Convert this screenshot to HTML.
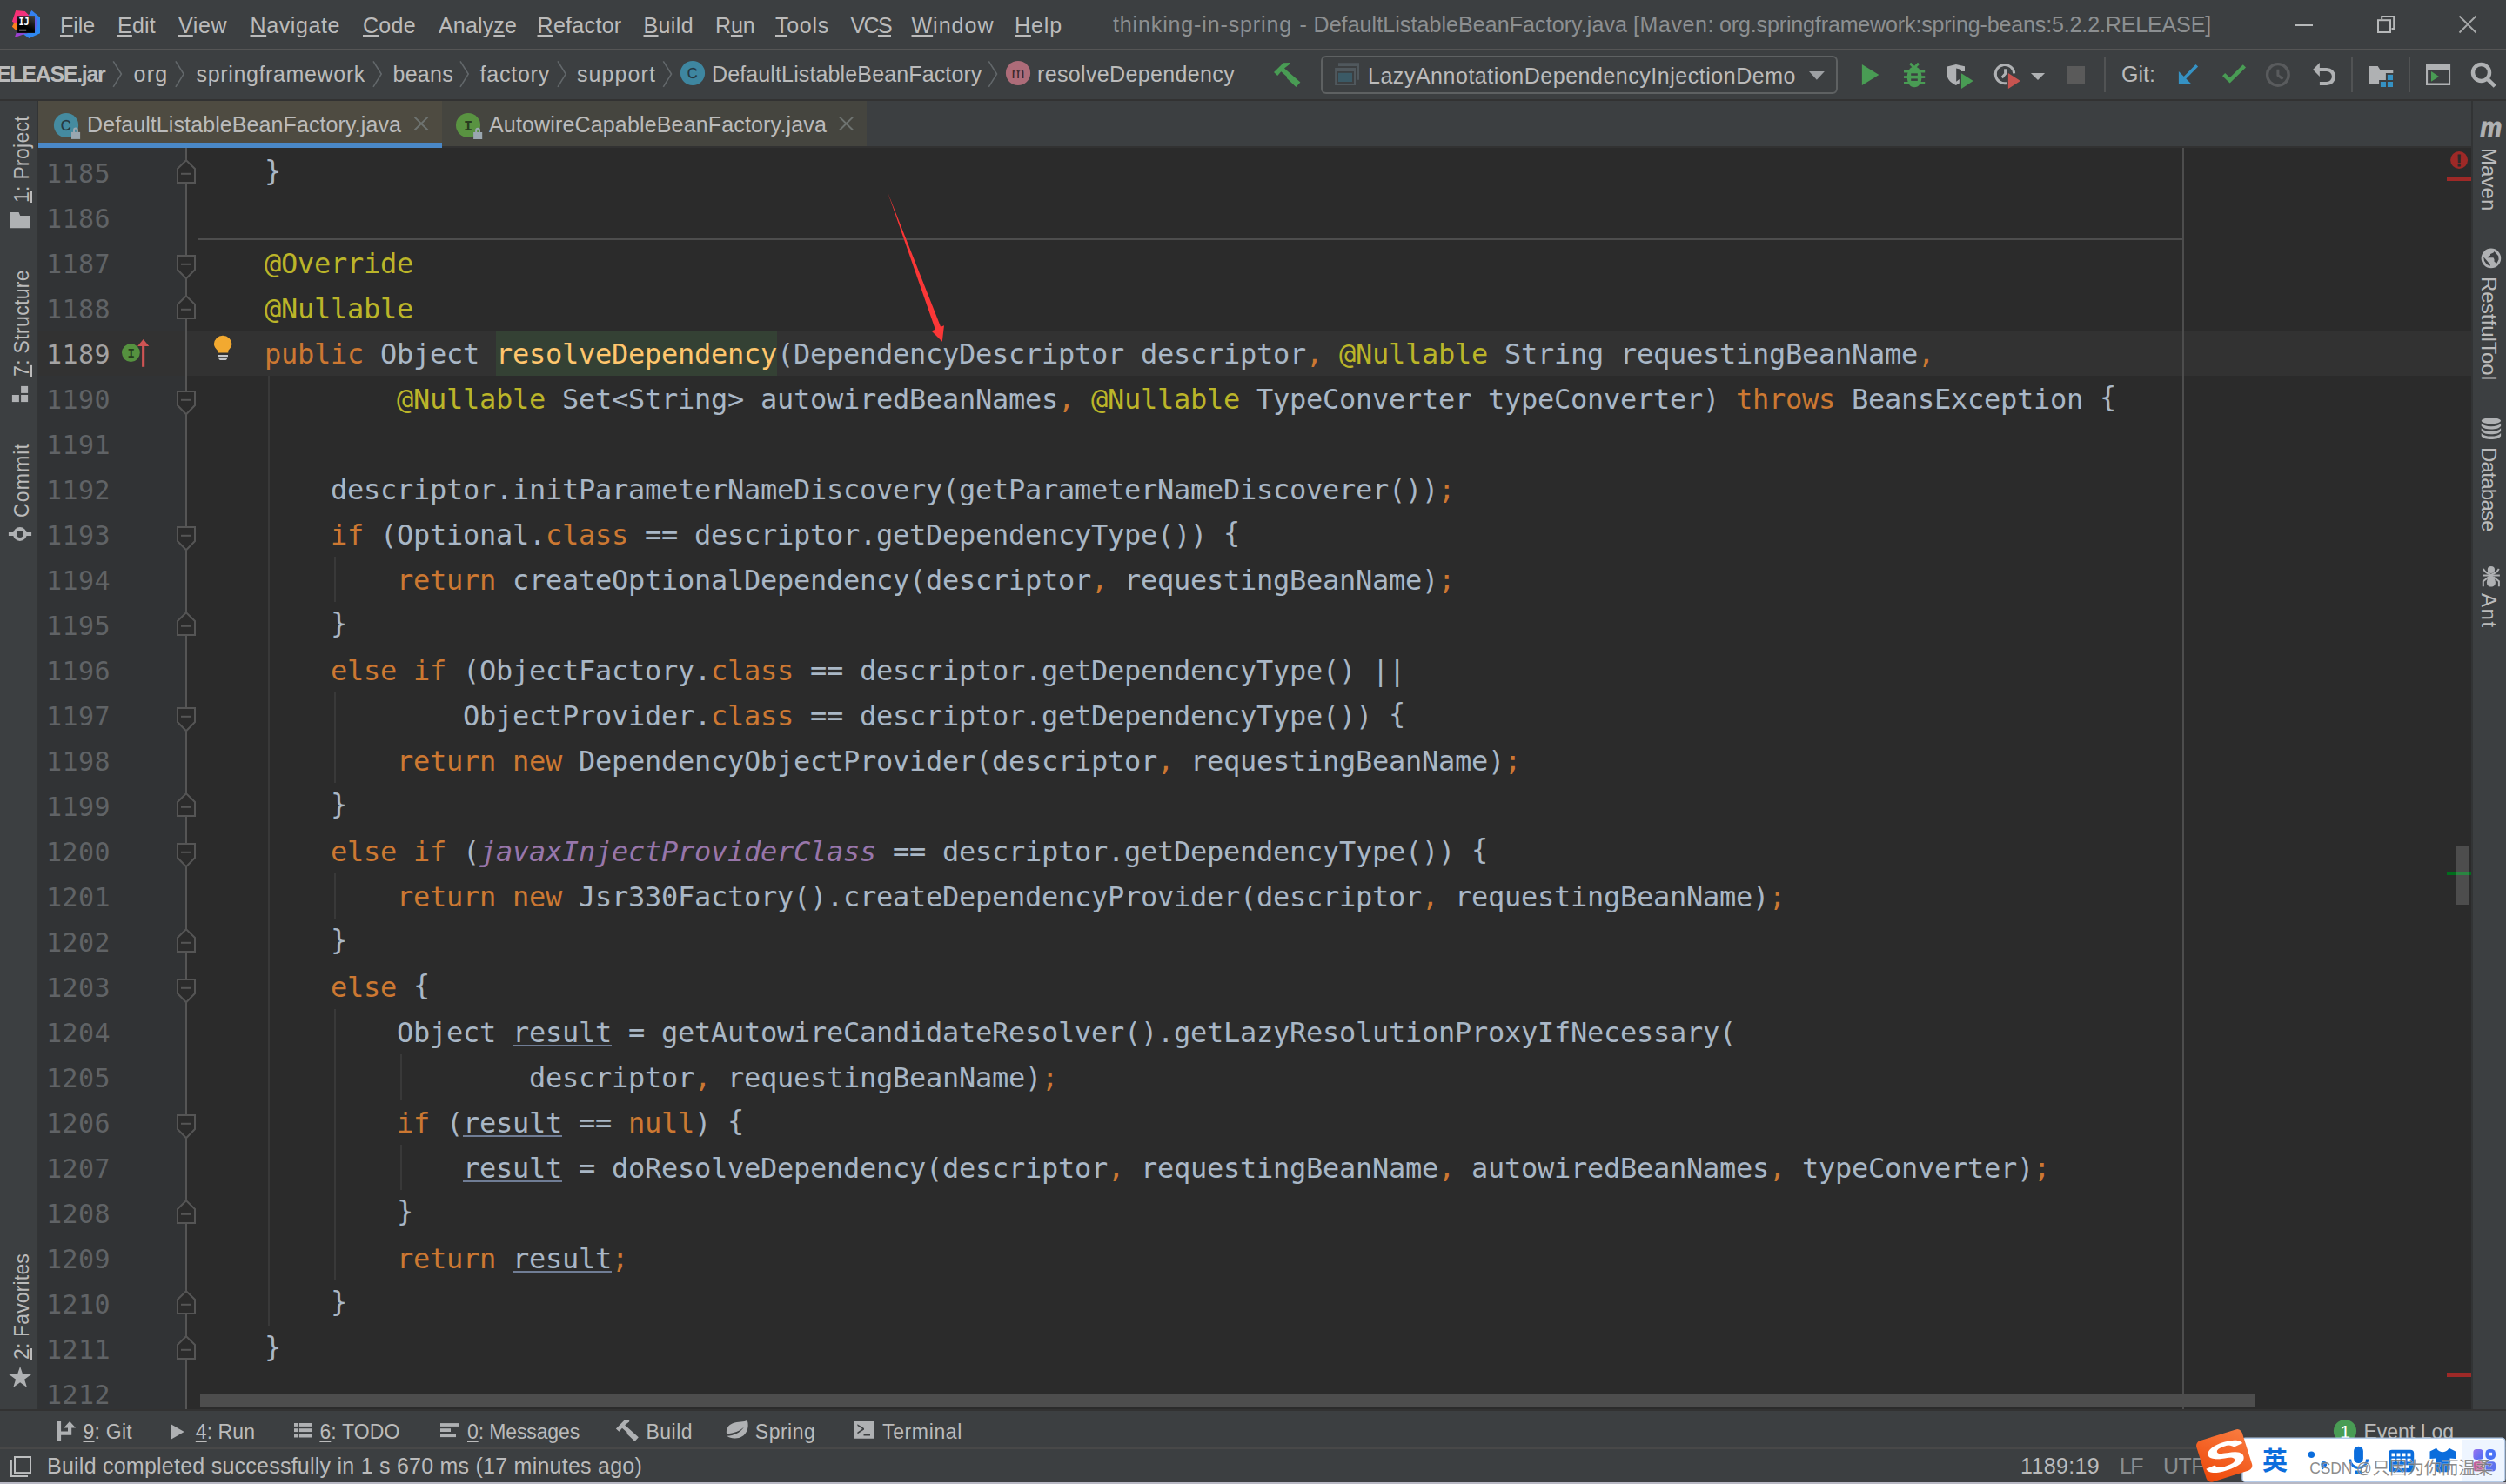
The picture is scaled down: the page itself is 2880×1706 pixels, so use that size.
<!DOCTYPE html>
<html lang="en"><head><meta charset="utf-8"><title>thinking-in-spring - DefaultListableBeanFactory.java</title>
<style>
*{box-sizing:border-box}
html,body{margin:0;padding:0}
body{width:2880px;height:1706px;overflow:hidden;background:#3c3f41;position:relative;font-family:"Liberation Sans", "Noto Sans CJK SC", sans-serif;color:#bbbbbb}
.a{position:absolute}
.t{position:absolute;line-height:0;white-space:pre;font-size:24px}
.t::before{content:"";display:inline-block;height:40px;width:0}
.r{position:absolute;line-height:0;white-space:pre;font-size:23px;transform-origin:0 0;transform:rotate(-90deg)}
.r::before{content:"";display:inline-block;height:40px;width:0}
.rr{position:absolute;line-height:0;white-space:pre;font-size:23px;transform-origin:0 0;transform:rotate(90deg)}
.rr::before{content:"";display:inline-block;height:40px;width:0}
u{text-decoration:underline;text-underline-offset:2.4px;text-decoration-thickness:2px}
.cl{position:absolute;left:228px;height:52px;line-height:0;white-space:pre;font-family:"DejaVu Sans Mono", "Liberation Mono", monospace;font-size:32px;letter-spacing:-0.266px;color:#a9b7c6}
.cl::before{content:"";display:inline-block;height:38px;width:0}
.ln{position:absolute;left:53px;width:80px;height:52px;line-height:0;white-space:pre;font-family:"DejaVu Sans Mono", "Liberation Mono", monospace;font-size:30px;letter-spacing:0.4px;color:#606366}
.ln::before{content:"";display:inline-block;height:38px;width:0}
.k{color:#cc7832}.an{color:#bbb529}.md{color:#ffc66d}
.br{position:relative;top:-3px}.sf{color:#9876aa;font-style:italic}.rv{text-decoration:underline #707d95;text-decoration-thickness:2px;text-underline-offset:3px}
svg{position:absolute;overflow:visible}
</style></head>
<body>
<!-- ===== menu bar ===== -->
<div class="a" id="menubar" style="left:0;top:0;width:2880px;height:56px;background:#3c3f41"></div>
<div class="a" style="left:0;top:56px;width:2880px;height:2px;background:#555555"></div>
<!-- ===== nav bar ===== -->
<div class="a" id="navbar" style="left:0;top:58px;width:2880px;height:56px;background:#3c3f41"></div>
<div class="a" style="left:0;top:114px;width:2880px;height:2px;background:#323232"></div>
<!-- ===== tab row ===== -->
<div class="a" id="tabs" style="left:44px;top:116px;width:2798px;height:52px;background:#3c3f41"></div>
<div class="a" style="left:44px;top:116px;width:464px;height:53px;background:#4e4b41"></div>
<div class="a" style="left:44px;top:164px;width:464px;height:6px;background:#4a88c7"></div>
<div class="a" style="left:508px;top:116px;width:488px;height:52px;background:#45453f"></div>
<!-- ===== editor ===== -->
<div class="a" id="editor" style="left:44px;top:168px;width:2798px;height:1452px;background:#2b2b2b"></div>
<div class="a" id="gutter" style="left:44px;top:168px;width:170px;height:1452px;background:#313335"></div>
<div class="a" style="left:44px;top:164px;width:464px;height:6px;background:#4a88c7"></div>
<div class="a" style="left:508px;top:168px;width:2332px;height:2px;background:#323232"></div>
<!-- caret row -->
<div class="a" style="left:44px;top:380px;width:2797px;height:52px;background:#323232"></div>
<div class="a" style="left:570px;top:380px;width:323px;height:52px;background:#344134"></div>
<!-- method separator -->
<div class="a" style="left:228px;top:274px;width:2281px;height:2px;background:#4d4d4d"></div>
<!-- right margin -->
<div class="a" style="left:2508px;top:170px;width:2px;height:1450px;background:#4d4d4d"></div>
<!-- indent guides -->
<div class="a" style="left:308px;top:432px;width:2px;height:1092px;background:#393939"></div>
<div class="a" style="left:384px;top:640px;width:2px;height:52px;background:#393939"></div>
<div class="a" style="left:384px;top:796px;width:2px;height:104px;background:#393939"></div>
<div class="a" style="left:384px;top:1004px;width:2px;height:52px;background:#393939"></div>
<div class="a" style="left:384px;top:1160px;width:2px;height:312px;background:#393939"></div>
<div class="a" style="left:460px;top:1212px;width:2px;height:52px;background:#393939"></div>
<div class="a" style="left:460px;top:1316px;width:2px;height:52px;background:#393939"></div>
<!-- fold line -->
<div class="a" style="left:213px;top:170px;width:2px;height:1450px;background:#555555"></div>
<div class="ln" style="top:172px">1185</div>
<div class="cl" style="top:172px">    <span class="br">}</span></div>
<div class="ln" style="top:224px">1186</div>
<div class="ln" style="top:276px">1187</div>
<div class="cl" style="top:276px">    <span class="an">@Override</span></div>
<div class="ln" style="top:328px">1188</div>
<div class="cl" style="top:328px">    <span class="an">@Nullable</span></div>
<div class="ln" style="top:380px;color:#a4a3a3">1189</div>
<div class="cl" style="top:380px">    <span class="k">public</span> Object <span class="md">resolveDependency</span>(DependencyDescriptor descriptor<span class="k">,</span> <span class="an">@Nullable</span> String requestingBeanName<span class="k">,</span></div>
<div class="ln" style="top:432px">1190</div>
<div class="cl" style="top:432px">            <span class="an">@Nullable</span> Set&lt;String&gt; autowiredBeanNames<span class="k">,</span> <span class="an">@Nullable</span> TypeConverter typeConverter) <span class="k">throws</span> BeansException <span class="br">{</span></div>
<div class="ln" style="top:484px">1191</div>
<div class="ln" style="top:536px">1192</div>
<div class="cl" style="top:536px">        descriptor.initParameterNameDiscovery(getParameterNameDiscoverer())<span class="k">;</span></div>
<div class="ln" style="top:588px">1193</div>
<div class="cl" style="top:588px">        <span class="k">if</span> (Optional.<span class="k">class</span> == descriptor.getDependencyType()) <span class="br">{</span></div>
<div class="ln" style="top:640px">1194</div>
<div class="cl" style="top:640px">            <span class="k">return</span> createOptionalDependency(descriptor<span class="k">,</span> requestingBeanName)<span class="k">;</span></div>
<div class="ln" style="top:692px">1195</div>
<div class="cl" style="top:692px">        <span class="br">}</span></div>
<div class="ln" style="top:744px">1196</div>
<div class="cl" style="top:744px">        <span class="k">else</span> <span class="k">if</span> (ObjectFactory.<span class="k">class</span> == descriptor.getDependencyType() ||</div>
<div class="ln" style="top:796px">1197</div>
<div class="cl" style="top:796px">                ObjectProvider.<span class="k">class</span> == descriptor.getDependencyType()) <span class="br">{</span></div>
<div class="ln" style="top:848px">1198</div>
<div class="cl" style="top:848px">            <span class="k">return</span> <span class="k">new</span> DependencyObjectProvider(descriptor<span class="k">,</span> requestingBeanName)<span class="k">;</span></div>
<div class="ln" style="top:900px">1199</div>
<div class="cl" style="top:900px">        <span class="br">}</span></div>
<div class="ln" style="top:952px">1200</div>
<div class="cl" style="top:952px">        <span class="k">else</span> <span class="k">if</span> (<span class="sf">javaxInjectProviderClass</span> == descriptor.getDependencyType()) <span class="br">{</span></div>
<div class="ln" style="top:1004px">1201</div>
<div class="cl" style="top:1004px">            <span class="k">return</span> <span class="k">new</span> Jsr330Factory().createDependencyProvider(descriptor<span class="k">,</span> requestingBeanName)<span class="k">;</span></div>
<div class="ln" style="top:1056px">1202</div>
<div class="cl" style="top:1056px">        <span class="br">}</span></div>
<div class="ln" style="top:1108px">1203</div>
<div class="cl" style="top:1108px">        <span class="k">else</span> <span class="br">{</span></div>
<div class="ln" style="top:1160px">1204</div>
<div class="cl" style="top:1160px">            Object <span class="rv">result</span> = getAutowireCandidateResolver().getLazyResolutionProxyIfNecessary(</div>
<div class="ln" style="top:1212px">1205</div>
<div class="cl" style="top:1212px">                    descriptor<span class="k">,</span> requestingBeanName)<span class="k">;</span></div>
<div class="ln" style="top:1264px">1206</div>
<div class="cl" style="top:1264px">            <span class="k">if</span> (<span class="rv">result</span> == <span class="k">null</span>) <span class="br">{</span></div>
<div class="ln" style="top:1316px">1207</div>
<div class="cl" style="top:1316px">                <span class="rv">result</span> = doResolveDependency(descriptor<span class="k">,</span> requestingBeanName<span class="k">,</span> autowiredBeanNames<span class="k">,</span> typeConverter)<span class="k">;</span></div>
<div class="ln" style="top:1368px">1208</div>
<div class="cl" style="top:1368px">            <span class="br">}</span></div>
<div class="ln" style="top:1420px">1209</div>
<div class="cl" style="top:1420px">            <span class="k">return</span> <span class="rv">result</span><span class="k">;</span></div>
<div class="ln" style="top:1472px">1210</div>
<div class="cl" style="top:1472px">        <span class="br">}</span></div>
<div class="ln" style="top:1524px">1211</div>
<div class="cl" style="top:1524px">    <span class="br">}</span></div>
<div class="ln" style="top:1576px">1212</div>
<!-- horizontal scrollbar -->
<div class="a" style="left:230px;top:1602px;width:2362px;height:16px;background:#4d4d4d"></div>
<!-- vertical scrollbar + stripe marks -->
<div class="a" style="left:2812px;top:1002px;width:28px;height:4px;background:#006e1c"></div>
<div class="a" style="left:2822px;top:972px;width:16px;height:68px;background:rgba(255,255,255,.165)"></div>
<div class="a" style="left:2812px;top:204px;width:28px;height:4px;background:#9e2927"></div>
<div class="a" style="left:2812px;top:1578px;width:28px;height:5px;background:#9e2927"></div>
<!-- ===== left strip ===== -->
<div class="a" id="leftstrip" style="left:0;top:116px;width:42px;height:1504px;background:#3c3f41"></div>
<div class="a" style="left:42px;top:116px;width:2px;height:1504px;background:#323435"></div>
<!-- ===== right strip ===== -->
<div class="a" id="rightstrip" style="left:2842px;top:116px;width:38px;height:1504px;background:#3c3f41"></div>
<div class="a" style="left:2840px;top:116px;width:2px;height:1504px;background:#323435"></div>
<!-- ===== bottom tool bar ===== -->
<div class="a" style="left:0;top:1620px;width:2880px;height:2px;background:#323232"></div>
<div class="a" id="toolbar" style="left:0;top:1622px;width:2880px;height:42px;background:#3c3f41"></div>
<div class="a" style="left:0;top:1664px;width:2880px;height:2px;background:#484848"></div>
<div class="a" id="statusbar" style="left:0;top:1666px;width:2880px;height:37px;background:#3c3f41"></div>
<div class="a" style="left:0;top:1704px;width:2880px;height:2px;background:#b8b8c4"></div>
<div class="t" id="t0" style="left:69.0px;top:-2.0px;font-size:25px;letter-spacing:-0.074px;"><u>F</u>ile</div>
<div class="t" id="t1" style="left:135.0px;top:-2.0px;font-size:25px;letter-spacing:0.227px;"><u>E</u>dit</div>
<div class="t" id="t2" style="left:205.0px;top:-2.0px;font-size:25px;letter-spacing:0.562px;"><u>V</u>iew</div>
<div class="t" id="t3" style="left:287.5px;top:-2.0px;font-size:25px;letter-spacing:0.602px;"><u>N</u>avigate</div>
<div class="t" id="t4" style="left:417.0px;top:-2.0px;font-size:25px;letter-spacing:0.305px;"><u>C</u>ode</div>
<div class="t" id="t5" style="left:504.0px;top:-2.0px;font-size:25px;letter-spacing:0.150px;">Analy<u>z</u>e</div>
<div class="t" id="t6" style="left:617.5px;top:-2.0px;font-size:25px;letter-spacing:0.312px;"><u>R</u>efactor</div>
<div class="t" id="t7" style="left:739.5px;top:-2.0px;font-size:25px;letter-spacing:0.378px;"><u>B</u>uild</div>
<div class="t" id="t8" style="left:822.0px;top:-2.0px;font-size:25px;letter-spacing:-0.125px;">R<u>u</u>n</div>
<div class="t" id="t9" style="left:891.0px;top:-2.0px;font-size:25px;letter-spacing:0.725px;"><u>T</u>ools</div>
<div class="t" id="t10" style="left:977.5px;top:-2.0px;font-size:25px;letter-spacing:-1.641px;">VC<u>S</u></div>
<div class="t" id="t11" style="left:1047.5px;top:-2.0px;font-size:25px;letter-spacing:1.010px;"><u>W</u>indow</div>
<div class="t" id="t12" style="left:1166.0px;top:-2.0px;font-size:25px;letter-spacing:0.891px;"><u>H</u>elp</div>
<div class="t" id="t13" style="left:1279.0px;top:-3.5px;font-size:25px;color:#8c8f91;letter-spacing:0.868px;">thinking-in-spring</div>
<div class="t" id="t14" style="left:1493.5px;top:-3.5px;font-size:25px;color:#8c8f91;letter-spacing:0.672px;">-</div>
<div class="t" id="t15" style="left:1509.5px;top:-3.5px;font-size:25px;color:#8c8f91;letter-spacing:0.078px;">DefaultListableBeanFactory.java</div>
<div class="t" id="t16" style="left:1877.0px;top:-3.5px;font-size:25px;color:#8c8f91;letter-spacing:0.580px;">[Maven:</div>
<div class="t" id="t17" style="left:1976.0px;top:-3.5px;font-size:25px;color:#8c8f91;letter-spacing:-0.130px;">org.springframework:spring-beans:5.2.2.RELEASE]</div>
<div class="t" id="t18" style="left:-4.0px;top:54.0px;font-size:25px;font-weight:bold;letter-spacing:-1.306px;">ELEASE.jar</div>
<div class="t" id="t19" style="left:153.5px;top:54.0px;font-size:25px;letter-spacing:1.286px;">org</div>
<div class="t" id="t20" style="left:225.5px;top:54.0px;font-size:25px;letter-spacing:0.648px;">springframework</div>
<div class="t" id="t21" style="left:451.5px;top:54.0px;font-size:25px;letter-spacing:0.275px;">beans</div>
<div class="t" id="t22" style="left:551.5px;top:54.0px;font-size:25px;letter-spacing:0.781px;">factory</div>
<div class="t" id="t23" style="left:663.0px;top:54.0px;font-size:25px;letter-spacing:1.087px;">support</div>
<div class="t" id="t24" style="left:818.0px;top:54.0px;font-size:25px;letter-spacing:0.130px;">DefaultListableBeanFactory</div>
<div class="t" id="t25" style="left:1192.0px;top:54.0px;font-size:25px;letter-spacing:0.354px;">resolveDependency</div>
<div class="t" id="t26" style="left:1572.0px;top:56.0px;font-size:25px;letter-spacing:0.526px;">LazyAnnotationDependencyInjectionDemo</div>
<div class="t" id="t27" style="left:2438.0px;top:53.5px;font-size:25px;letter-spacing:0.023px;">Git:</div>
<div class="t" id="t28" style="left:100.0px;top:112.0px;font-size:25px;letter-spacing:0.094px;">DefaultListableBeanFactory.java</div>
<div class="t" id="t29" style="left:562.0px;top:112.0px;font-size:25px;letter-spacing:0.158px;">AutowireCapableBeanFactory.java</div>
<div class="t" id="t30" style="left:95.5px;top:1614.0px;font-size:23px;letter-spacing:0.255px;"><u>9</u>: Git</div>
<div class="t" id="t31" style="left:224.8px;top:1614.0px;font-size:23px;letter-spacing:0.078px;"><u>4</u>: Run</div>
<div class="t" id="t32" style="left:367.4px;top:1614.0px;font-size:23px;letter-spacing:0.116px;"><u>6</u>: TODO</div>
<div class="t" id="t33" style="left:537.0px;top:1614.0px;font-size:23px;letter-spacing:-0.128px;"><u>0</u>: Messages</div>
<div class="t" id="t34" style="left:742.4px;top:1614.0px;font-size:23px;letter-spacing:0.509px;">Build</div>
<div class="t" id="t35" style="left:867.8px;top:1614.0px;font-size:23px;letter-spacing:0.503px;">Spring</div>
<div class="t" id="t36" style="left:1014.0px;top:1614.0px;font-size:23px;letter-spacing:0.635px;">Terminal</div>
<div class="t" id="t37" style="left:2716.5px;top:1614.0px;font-size:23px;letter-spacing:-0.010px;">Event Log</div>
<div class="t" id="t38" style="left:54.0px;top:1654.0px;font-size:25px;letter-spacing:0.241px;">Build completed successfully in 1 s 670 ms (17 minutes ago)</div>
<div class="t" id="t39" style="left:2322.0px;top:1654.0px;font-size:25px;letter-spacing:0.355px;">1189:19</div>
<div class="t" id="t40" style="left:2436.0px;top:1654.0px;font-size:25px;color:#8a8d8f;letter-spacing:-1.594px;">LF</div>
<div class="t" id="t41" style="left:2486.0px;top:1654.0px;font-size:25px;color:#8a8d8f;letter-spacing:-0.566px;">UTF-8</div>
<div class="r" id="t42" style="left:-7.0px;top:233.0px;letter-spacing:0.283px;"><u>1</u>: Project</div>
<div class="r" id="t43" style="left:-7.0px;top:433.0px;letter-spacing:0.341px;"><u>7</u>: Structure</div>
<div class="r" id="t44" style="left:-7.0px;top:595.0px;letter-spacing:1.128px;">Commit</div>
<div class="r" id="t45" style="left:-7.0px;top:1563.0px;letter-spacing:0.152px;"><u>2</u>: Favorites</div>
<div class="rr" id="t46" style="left:2891.5px;top:169.7px;font-size:24px;letter-spacing:0.071px;">Maven</div>
<div class="rr" id="t47" style="left:2891.5px;top:318.0px;font-size:24px;letter-spacing:0.024px;">RestfulTool</div>
<div class="rr" id="t48" style="left:2891.5px;top:514.0px;font-size:24px;letter-spacing:-0.719px;">Database</div>
<div class="rr" id="t49" style="left:2891.5px;top:682.0px;font-size:24px;letter-spacing:1.556px;">Ant</div>
<svg id="icons" width="2880" height="1706" viewBox="0 0 2880 1706" style="left:0;top:0">
<defs><linearGradient id="lgb" x1="0" y1="0" x2="1" y2="1"><stop offset="0" stop-color="#3a7bf2"/><stop offset="1" stop-color="#2a8cf0"/></linearGradient><linearGradient id="lgp" x1="0" y1="0" x2="1" y2="1"><stop offset="0" stop-color="#fc2d6e"/><stop offset="1" stop-color="#e8388c"/></linearGradient><linearGradient id="lgm" x1="0" y1="1" x2="1" y2="0"><stop offset="0" stop-color="#b436c9"/><stop offset="1" stop-color="#5d5be0"/></linearGradient><linearGradient id="lgk" x1="1" y1="0" x2="0.4" y2="1"><stop offset="0" stop-color="#454545"/><stop offset="0.7" stop-color="#000"/></linearGradient><linearGradient id="lgs" x1="1" y1="0" x2="0" y2="1"><stop offset="0" stop-color="#f97c40"/><stop offset="1" stop-color="#ee4709"/></linearGradient><linearGradient id="lgq" x1="0" y1="0" x2="1" y2="1"><stop offset="0" stop-color="#9a73ee"/><stop offset="1" stop-color="#4a6cf5"/></linearGradient></defs>
<g id="logo"><polygon points="18.2,12 28.7,12.9 33.2,17.5 33.2,19 20.1,19 20.1,26.1 16,26.1 13.9,24.7" fill="url(#lgp)"/><polygon points="16.3,26.1 20.1,26.1 20.1,34 18.7,34.9 13.9,30.7" fill="#fc801d"/><polygon points="36.4,12 46,20.1 46,38.3 33.5,44 26.8,39.3 33,37.8 40,37.8 40,18.2 33.2,18.2 33,17.2" fill="url(#lgb)"/><polygon points="40,19 43,25 40,37.8" fill="#7a4fe0" opacity=".7"/><polygon points="20.1,34 20.1,37.8 33,37.8 26.8,39.6 16.8,42.9" fill="url(#lgm)"/><rect x="20.1" y="18.2" width="19.9" height="19.6" fill="url(#lgk)"/><text x="21.4" y="29" font-family="'DejaVu Sans Mono','Liberation Mono',monospace" font-weight="bold" font-size="11.5" fill="#fff" textLength="12.4" lengthAdjust="spacingAndGlyphs">IJ</text><rect x="22" y="33.9" width="8.2" height="1.4" fill="#fff"/></g>
<g id="winbtns" fill="none" stroke="#b7b9ba" stroke-width="2"><path d="M2638 29H2658"/><rect x="2733" y="23.2" width="14" height="13.8"/><path d="M2737.2 22.2V19H2751.2V33H2748.5"/><path d="M2826.5 18.5L2845.5 37.5M2845.5 18.5L2826.5 37.5" stroke="#a7a9aa" stroke-width="1.9"/></g>
<path d="M130.2 70.3l9.2 14.8l-9.2 14.8" fill="none" stroke="#63686b" stroke-width="1.6"/>
<path d="M201.9 70.3l9.2 14.8l-9.2 14.8" fill="none" stroke="#63686b" stroke-width="1.6"/>
<path d="M429.0 70.3l9.2 14.8l-9.2 14.8" fill="none" stroke="#63686b" stroke-width="1.6"/>
<path d="M529.0 70.3l9.2 14.8l-9.2 14.8" fill="none" stroke="#63686b" stroke-width="1.6"/>
<path d="M641.0 70.3l9.2 14.8l-9.2 14.8" fill="none" stroke="#63686b" stroke-width="1.6"/>
<path d="M762.3 70.3l9.2 14.8l-9.2 14.8" fill="none" stroke="#63686b" stroke-width="1.6"/>
<path d="M1136.3 70.3l9.2 14.8l-9.2 14.8" fill="none" stroke="#63686b" stroke-width="1.6"/>
<g id="navicons"><circle cx="796" cy="84" r="14.1" fill="#40b6e0" fill-opacity=".6"/><text x="795.7" y="89.8" font-family="'Liberation Sans',sans-serif" font-size="16.5" fill="#1f2a30" fill-opacity=".85" text-anchor="middle" stroke="#1f2a30" stroke-opacity=".5" stroke-width=".5">C</text><circle cx="1170" cy="84" r="14.1" fill="#f98b9e" fill-opacity=".6"/><text x="1169.9" y="89.9" font-family="'Liberation Sans',sans-serif" font-size="18" fill="#2f1f24" fill-opacity=".9" text-anchor="middle">m</text></g>
<path id="hammer" d="M1464 83.1L1474.9 72.2L1482.1 72L1481.8 73.9L1476 78.4L1494.4 94.6L1489.4 99.9L1479 90.1V88.2L1472.3 82.3L1468.2 87.1Z" fill="#499c54"/>
<rect x="1519" y="65" width="592" height="42" rx="5" fill="none" stroke="#5e6162" stroke-width="2"/>
<g id="cfgicon"><path d="M1538 72.2H1562V91.8H1560V75.9H1538Z" fill="#50585d"/><path d="M1534.1 78.1H1558V97.9H1534.1Z M1536.1 82.1V95.9H1556V82.1Z" fill="#50585d" fill-rule="evenodd"/><rect x="1538" y="83.8" width="16" height="10.2" fill="#3b5a66"/></g>
<polygon points="2079,82 2096.9,82 2087.9,91.8" fill="#9da0a3"/>
<polygon id="run" points="2139.9,74.1 2159.4,85.9 2139.9,97.9" fill="#499c54"/>
<g id="bug" fill="#499c54"><path d="M2191.8 88.5c0-7 3.3-12 8.3-12s8.3 5 8.3 12s-3.3 11.8-8.3 11.8s-8.3-4.8-8.3-11.8z"/><path d="M2195.1 72.8L2200.1 77.8L2205 72.8" fill="none" stroke="#499c54" stroke-width="3"/><rect x="2188" y="80.6" width="24.2" height="2.9"/><rect x="2188" y="87.2" width="24.2" height="2.7"/><rect x="2188" y="94" width="24.2" height="3"/><rect x="2196.2" y="84.3" width="7.6" height="2.5" fill="#3c3f41"/><rect x="2196.2" y="90.4" width="7.6" height="2.5" fill="#3c3f41"/></g>
<g id="cover"><path d="M2237.8 76.4L2247.9 73.9L2258 76.2V82H2254V80L2248.2 78.4V93.8L2251.8 91V95.5L2247.9 98C2241 94.5 2237.8 91 2237.8 86Z" fill="#afb1b3"/><polygon points="2254,84.3 2267.7,93.1 2254,102.1" fill="#499c54"/></g>
<g id="profile"><path d="M2314.7 84.4A10.7 10.7 0 1 0 2306.3 95.6" fill="none" stroke="#afb1b3" stroke-width="3"/><path d="M2304.6 79.2V84.8L2300.7 89.3" fill="none" stroke="#afb1b3" stroke-width="3"/><polygon points="2307.9,84 2321.9,93.1 2307.9,102.1" fill="#c75450"/><polygon points="2333.9,83.9 2350.1,83.9 2342,92.1" fill="#afb1b3"/></g>
<rect x="2376" y="76" width="20" height="20" fill="#5a5a5a"/>
<rect x="2418" y="66" width="2" height="40" fill="#515354"/>
<rect x="2702" y="66" width="2" height="40" fill="#515354"/>
<rect x="2768" y="66" width="2" height="40" fill="#515354"/>
<g id="gitupd"><path d="M2524.8 75.2L2510 90.3" stroke="#3592c4" stroke-width="3.7" fill="none"/><polygon points="2503.9,82 2503.9,96 2517.9,96" fill="#3592c4"/></g>
<path d="M2555.6 85.7L2562.6 92.4L2579.4 75.9" fill="none" stroke="#499c54" stroke-width="4.6"/>
<g fill="none" stroke="#595b5d"><circle cx="2617.9" cy="85.9" r="12.3" stroke-width="3.4"/><path d="M2617.9 79.8V86.5L2623.5 90.7" stroke-width="3"/></g>
<g id="undo"><polygon points="2658.1,80 2665.9,72 2665.9,87.9" fill="#afb1b3"/><path d="M2665 80H2674A8 8 0 0 1 2674 96H2665.9" fill="none" stroke="#afb1b3" stroke-width="4.2"/></g>
<g id="pstruct"><polygon points="2722,76 2732.7,76 2735.2,79.9 2750.3,79.9 2750.3,84 2741.9,84 2741.9,92.1 2734.1,92.1 2734.1,96.1 2722,96.1" fill="#afb1b3"/><rect x="2743.9" y="85.9" width="6.1" height="6.1" fill="#3592c4"/><rect x="2735.9" y="94" width="6.1" height="6" fill="#3592c4"/><rect x="2743.9" y="94" width="6.1" height="6" fill="#3592c4"/></g>
<g id="runany"><path d="M2788 73.9H2816.1V98.1H2788Z M2790.1 80.2V95.6H2814V80.2Z" fill="#afb1b3" fill-rule="evenodd"/><polygon points="2794,82.1 2803,88 2794,93.8" fill="#499c54"/></g>
<g id="search" fill="none" stroke="#afb1b3" stroke-width="4.5"><circle cx="2851.5" cy="83.5" r="9.5"/><path d="M2858.4 90.6L2867.3 99.1"/></g>
<g id="tabicons"><circle cx="76" cy="144" r="14.1" fill="#40b6e0" fill-opacity=".6"/><text x="75.7" y="149.8" font-family="'Liberation Sans',sans-serif" font-size="16.5" fill="#1f2a30" fill-opacity=".85" text-anchor="middle" stroke="#1f2a30" stroke-opacity=".5" stroke-width=".5">C</text><rect x="82" y="151.9" width="10.1" height="8" fill="#9aa7b0"/><path d="M85.05 152.1v-2.6a1.9 1.9 0 0 1 3.8 0v2.6" fill="none" stroke="#9aa7b0" stroke-width="2"/><circle cx="538" cy="144" r="14" fill="#62b543" fill-opacity=".7"/><text x="538" y="149.9" font-family="'Liberation Mono',monospace" font-weight="bold" font-size="17" fill="#22311c" fill-opacity=".9" text-anchor="middle">I</text><rect x="544.1" y="152" width="10.1" height="8" fill="#9aa7b0"/><path d="M547.15 152.2v-2.6a1.9 1.9 0 0 1 3.8 0v2.6" fill="none" stroke="#9aa7b0" stroke-width="2"/><path d="M476.5 134.6L491.6 149.5M491.6 134.6L476.5 149.5M965 134.6L980.1 149.5M980.1 134.6L965 149.5" stroke="#6e7370" stroke-width="2" fill="none"/></g>
<g id="guticons"><circle cx="150.4" cy="405.6" r="10.4" fill="#55913f"/><text x="150.6" y="410.6" font-family="'Liberation Mono',monospace" font-weight="bold" font-size="14" fill="#1f3318" fill-opacity=".9" text-anchor="middle">I</text><polygon points="158.1,398 164.7,389.9 171.3,398" fill="#cf5454"/><rect x="163.1" y="397.5" width="3.1" height="24.3" fill="#cf5454"/><path d="M250.1 405.6V403C247.5 400.5 245.9 398 245.9 395.6a10.2 9.8 0 0 1 20.5 0c0 2.4-1.6 4.9-4.1 7.4V405.6Z" fill="#f2a930"/><rect x="250" y="408" width="12" height="2.2" fill="#c4c6c8"/><path d="M251.3 411.9H261.1C260.8 413.4 260 414 258.5 414H253.9C252.4 414 251.6 413.4 251.3 411.9Z" fill="#c4c6c8"/></g>
<g id="folds"><path d="M214 184.2 L224 194 V210 H204 V194 Z" fill="#2b2b2b" stroke="#555555" stroke-width="2"/><rect x="208" y="198.8" width="12" height="2" fill="#555555"/><path d="M214 340.2 L224 350 V366 H204 V350 Z" fill="#2b2b2b" stroke="#555555" stroke-width="2"/><rect x="208" y="354.8" width="12" height="2" fill="#555555"/><path d="M214 704.2 L224 714 V730 H204 V714 Z" fill="#2b2b2b" stroke="#555555" stroke-width="2"/><rect x="208" y="718.8" width="12" height="2" fill="#555555"/><path d="M214 912.2 L224 922 V938 H204 V922 Z" fill="#2b2b2b" stroke="#555555" stroke-width="2"/><rect x="208" y="926.8" width="12" height="2" fill="#555555"/><path d="M214 1068.2 L224 1078 V1094 H204 V1078 Z" fill="#2b2b2b" stroke="#555555" stroke-width="2"/><rect x="208" y="1082.8" width="12" height="2" fill="#555555"/><path d="M214 1380.2 L224 1390 V1406 H204 V1390 Z" fill="#2b2b2b" stroke="#555555" stroke-width="2"/><rect x="208" y="1394.8" width="12" height="2" fill="#555555"/><path d="M214 1484.2 L224 1494 V1510 H204 V1494 Z" fill="#2b2b2b" stroke="#555555" stroke-width="2"/><rect x="208" y="1498.8" width="12" height="2" fill="#555555"/><path d="M214 1536.2 L224 1546 V1562 H204 V1546 Z" fill="#2b2b2b" stroke="#555555" stroke-width="2"/><rect x="208" y="1550.8" width="12" height="2" fill="#555555"/><path d="M204 294 H224 V310 L214 320.2 L204 310 Z" fill="#2b2b2b" stroke="#555555" stroke-width="2"/><rect x="208" y="302.8" width="12" height="2" fill="#555555"/><path d="M204 450 H224 V466 L214 476.2 L204 466 Z" fill="#2b2b2b" stroke="#555555" stroke-width="2"/><rect x="208" y="458.8" width="12" height="2" fill="#555555"/><path d="M204 606 H224 V622 L214 632.2 L204 622 Z" fill="#2b2b2b" stroke="#555555" stroke-width="2"/><rect x="208" y="614.8" width="12" height="2" fill="#555555"/><path d="M204 814 H224 V830 L214 840.2 L204 830 Z" fill="#2b2b2b" stroke="#555555" stroke-width="2"/><rect x="208" y="822.8" width="12" height="2" fill="#555555"/><path d="M204 970 H224 V986 L214 996.2 L204 986 Z" fill="#2b2b2b" stroke="#555555" stroke-width="2"/><rect x="208" y="978.8" width="12" height="2" fill="#555555"/><path d="M204 1126 H224 V1142 L214 1152.2 L204 1142 Z" fill="#2b2b2b" stroke="#555555" stroke-width="2"/><rect x="208" y="1134.8" width="12" height="2" fill="#555555"/><path d="M204 1282 H224 V1298 L214 1308.2 L204 1298 Z" fill="#2b2b2b" stroke="#555555" stroke-width="2"/><rect x="208" y="1290.8" width="12" height="2" fill="#555555"/></g>
<g id="errs"><circle cx="2826.1" cy="184" r="10" fill="#9e2927"/><text x="2826.1" y="190.6" font-family="'Liberation Sans',sans-serif" font-weight="bold" font-size="18" fill="#2b2b2b" stroke="#2b2b2b" stroke-width=".8" text-anchor="middle">!</text></g>
<g id="lefticons" fill="#afb1b3"><polygon points="11.9,244.1 21.6,244.1 23.2,247.9 34.2,247.9 34.2,262.2 11.9,262.2"/><rect x="24.1" y="443.9" width="8" height="8"/><rect x="13.9" y="454" width="8" height="8.1"/><rect x="24.1" y="454" width="8" height="8.1"/><circle cx="22.9" cy="614" r="5.9" fill="none" stroke="#afb1b3" stroke-width="4"/><rect x="9.9" y="612" width="7.4" height="4"/><rect x="28.6" y="612" width="7.5" height="4"/><polygon points="23.1,1570.7 26.2,1579.9 36,1579.9 28.1,1585.7 31,1594.9 23.1,1589.3 15.2,1594.9 18.1,1585.7 10.3,1579.9 20,1579.9"/></g>
<g id="righticons"><text x="2850.3" y="157" font-family="'Liberation Sans',sans-serif" font-weight="bold" font-style="italic" font-size="31" fill="#afb1b3" stroke="#afb1b3" stroke-width=".9" textLength="25" lengthAdjust="spacingAndGlyphs">m</text>
<circle cx="2862.9" cy="296.9" r="10.3" fill="#afb1b3" stroke="#afb1b3" stroke-width="2"/><path d="M2866.5 289L2871.2 294.3L2871.6 298.3L2869.4 302.8L2866.5 300.7V298.3L2865.5 296.3H2858.9L2858.2 295.5L2861.9 293.8L2862.1 292L2865.5 290.6Z" fill="#3c3f41"/><path d="M2854.1 295.3L2859 300.7L2861.9 304.4L2861.7 305.8L2857.9 304L2855 299.9Z" fill="#3c3f41"/>
<g fill="#afb1b3"><ellipse cx="2862.9" cy="483.7" rx="11.2" ry="3.5"/><path d="M2851.7 486.6c2 2.6 6 3.6 11.2 3.6s9.200-1 11.200-3.600v3.200c-2 2.800-6 3.700-11.200 3.700s-9.200-.9-11.200-3.700z"/><path d="M2851.7 492.3c2 2.600 6 3.600 11.200 3.600s9.200-1 11.200-3.600v3.200c-2 2.800-6 3.700-11.200 3.700s-9.200-.9-11.200-3.700z"/><path d="M2851.7 498c2 2.600 6 3.600 11.200 3.600s9.200-1 11.200-3.600v3.200c-2 2.800-6 3.700-11.200 3.700s-9.200-.9-11.200-3.700z"/></g>
<g fill="#afb1b3" stroke="none"><circle cx="2862.9" cy="655" r="4.1"/><path d="M2862.900 660.500c3 2 5 5.500 5 9s-2 5-5 5s-5-1.500-5-5s2-7 5-9z"/><g fill="none" stroke="#afb1b3" stroke-width="2"><path d="M2853 661.500H2872.900"/><path d="M2853.800 654.100c2 3.500 5 5.500 9 6.500c4-1 7-3 9-6.500"/><path d="M2853.800 674.200V668.300L2860.500 663M2871.900 674.200V668.300L2865.300 663"/></g></g></g>
<g id="bticons" fill="#afb1b3"><path d="M65.800 1634H70.100V1645.500H78V1641.500H73.300L80.100 1634L87 1641.500H82.200V1649.800H70.100V1655.900H65.800Z"/><polygon points="196,1637.100 211.700,1646 196,1655.100"/>
<rect x="338" y="1636" width="4" height="3.900"/><rect x="343.900" y="1636" width="14.200" height="3.900"/>
<rect x="338" y="1642.2" width="4" height="3.900"/><rect x="343.900" y="1642.2" width="14.200" height="3.900"/>
<rect x="338" y="1648.6" width="4" height="3.900"/><rect x="343.900" y="1648.6" width="14.200" height="3.900"/>
<rect x="506" y="1636.100" width="22" height="3.800"/><rect x="506" y="1642.200" width="12" height="3.800"/><rect x="506" y="1648.300" width="18" height="3.800"/>
<path d="M1464 83.1L1474.9 72.2L1482.1 72L1481.8 73.9L1476 78.4L1494.4 94.6L1489.4 99.9L1479 90.1V88.2L1472.3 82.3L1468.2 87.1Z" transform="translate(707.900 1632.800) scale(.852 .864) translate(-1464 -72)"/>
<path d="M858.700 1632.800c1.500 4 1.300 8.500-.5 12.500c-2.500 5.500-8 8.500-14 8.200c-3.500-.2-6.500-1-8.800-2.800c8-.5 15-3.500 19.500-10c-5 4.500-11 7-19.800 7.500c-1-5 1.500-10 7-12c6-2.200 13-1 16.600-3.400z"/>
<path d="M982 1634H1004V1653.800H982Z M985.400 1639.100L991 1642.800L985.400 1646.500V1648.400L993 1643.500V1642L985.400 1637.200Z M992.500 1648.700H1000V1650.400H992.500Z" fill-rule="evenodd"/></g>
<g id="evlog"><circle cx="2695" cy="1645" r="13.100" fill="#499c54"/><text x="2695" y="1652.500" font-family="'Liberation Sans',sans-serif" font-size="21" fill="#fff" text-anchor="middle">1</text></g>
<g id="sbicon" fill="none" stroke="#bdbfc0" stroke-width="2"><rect x="17" y="1675" width="18" height="18.100"/><path d="M12.900 1678.100V1697.100H32"/></g>
<polygon id="annot" points="1020.3,221.5 1081.1,375.7 1085,374.2 1082.8,392.8 1070.5,380.6 1074.9,378.7" fill="#fb3737"/>
<g id="ime"><rect x="2577" y="1653.300" width="301.800" height="50" rx="3.500" fill="#fff" stroke="#b4cbe8" stroke-width="1.500"/><rect x="2830" y="1655" width="48" height="47" fill="#eaf3ff" opacity=".8"/><g transform="translate(2556.200 1673.400) rotate(-17.500)"><rect x="-27.500" y="-24.700" width="55" height="49.400" rx="6" fill="url(#lgs)"/><text x="0" y="16.500" transform="scale(1.680 1)" font-family="'Liberation Sans',sans-serif" font-weight="bold" font-style="italic" font-size="45" fill="#fff" text-anchor="middle">S</text></g><text x="2600" y="1690" font-family="'Noto Sans CJK SC','WenQuanYi Zen Hei',sans-serif" font-weight="bold" font-size="29" fill="#0b6ddc">英</text><circle cx="2656.400" cy="1672.300" r="3.700" fill="#0b6ddc"/><path d="M2667.300 1683.500a3.500 3.500 0 1 1 6 2.300l-5 4.500z" fill="#0b6ddc"/><rect x="2705.100" y="1662.700" width="10.800" height="19.300" rx="5.400" fill="#0b6ddc"/><path d="M2700.700 1677.500a9.900 9.900 0 0 0 19.800 0" fill="none" stroke="#0b6ddc" stroke-width="3"/><rect x="2706.500" y="1690.600" width="8" height="3.300" rx="1" fill="#0b6ddc"/><rect x="2745" y="1666.700" width="29.200" height="25.500" rx="4" fill="#0b6ddc"/><rect x="2748.5" y="1670.5" width="4" height="3.800" fill="#fff"/><rect x="2748.5" y="1676.7" width="4" height="3.800" fill="#fff"/><rect x="2754.5" y="1670.5" width="4" height="3.800" fill="#fff"/><rect x="2754.5" y="1676.7" width="4" height="3.800" fill="#fff"/><rect x="2760.5" y="1670.5" width="4" height="3.800" fill="#fff"/><rect x="2760.5" y="1676.7" width="4" height="3.800" fill="#fff"/><rect x="2766.5" y="1670.5" width="4" height="3.800" fill="#fff"/><rect x="2766.5" y="1676.7" width="4" height="3.800" fill="#fff"/><rect x="2751" y="1684.300" width="17" height="3.500" fill="#fff"/><path d="M2792.500 1668.500L2800 1664.700c2 3.500 5 4.500 7.300 4.500s5.300-1 7.300-4.500L2822 1668.500V1677l-6.500 -.5V1689c0 2-1.500 3.200-3.500 3.200h-9.500c-2 0-3.500-1.200-3.500-3.200V1676.500L2792.500 1677Z" fill="#0b6ddc"/><rect x="2842.400" y="1665.900" width="11.200" height="12" rx="3.500" fill="url(#lgq)"/><rect x="2856.400" y="1665.900" width="11.600" height="12" rx="5" fill="#4a72f5"/><rect x="2860.500" y="1669.800" width="3.600" height="3.600" fill="#fff"/><rect x="2842.400" y="1680.300" width="11.200" height="11.200" rx="3.500" fill="#c0609c"/><rect x="2856.400" y="1680.300" width="11.600" height="11.200" rx="3.500" fill="#5b72ee"/></g>
<g id="wm" font-family="'Liberation Sans','Noto Sans CJK SC',sans-serif" fill="#6e6e6e" fill-opacity=".8" stroke="#ffffff" stroke-opacity=".45" stroke-width="1" paint-order="stroke"><text x="2654.300" y="1693.500" font-size="17.500" textLength="71.500" lengthAdjust="spacing">CSDN @</text><text x="2726.500" y="1694.500" font-size="20" textLength="138.500" lengthAdjust="spacing">只因为你而温柔</text></g>
</svg>

</body></html>
